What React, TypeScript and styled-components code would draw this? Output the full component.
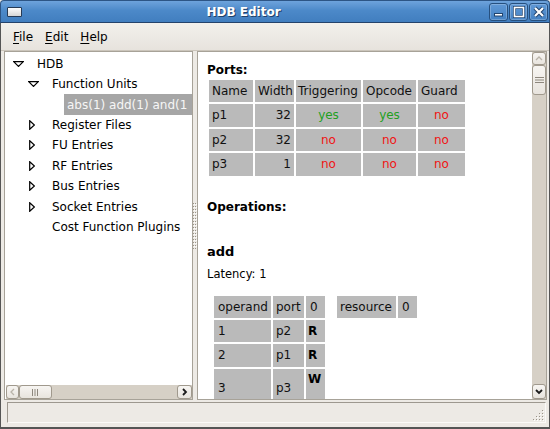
import React from "react";
import styled, { createGlobalStyle } from "styled-components";

const FONT = `"DejaVu Sans", "Liberation Sans", sans-serif`;

const GlobalStyle = createGlobalStyle`
  html, body { margin: 0; padding: 0; background: #edeae5; }
  body { font-family: ${FONT}; font-size: 12px; color: #000; }
  *, *::before, *::after { box-sizing: border-box; }
`;

const Window = styled.div`
  width: 550px;
  height: 429px;
  display: flex;
  flex-direction: column;
  overflow: hidden;
  background: #edeae5;
`;

const TitleBar = styled.div`
  height: 23px;
  flex: none;
  display: flex;
  align-items: center;
  padding: 0 1px 0 6px;
  background: linear-gradient(to bottom, #6ea3dc 0%, #4c89c9 45%, #417ebf 100%);
  border: 1px solid #2d5585;
  border-bottom-color: #24436b;
  border-radius: 4px 4px 0 0;
`;

const AppIcon = styled.div`
  width: 15px;
  height: 10px;
  flex: none;
  border: 1px solid #263a55;
  border-radius: 1px;
  background: linear-gradient(#fdfdfd, #d6d6d6);
`;

const TitleText = styled.div`
  flex: 1;
  text-align: center;
  padding-right: 23px;
  color: #fff;
  font-weight: bold;
  font-size: 12px;
  text-shadow: 1px 1px 0 #21416a;
`;

const TitleButton = styled.div`
  width: 19px;
  height: 18px;
  flex: none;
  margin-left: 1px;
  border: 1px solid #26507f;
  border-radius: 3px;
  background: linear-gradient(#5f98d6, #4582c3);
  box-shadow: inset 0 0 0 1px rgba(255, 255, 255, 0.22);
  display: flex;
  align-items: center;
  justify-content: center;
`;

const Frame = styled.div`
  flex: 1;
  min-height: 0;
  display: flex;
  flex-direction: column;
  border-left: 1px solid #555;
  border-right: 1px solid #555;
  border-bottom: 2px solid #555;
`;

const MenuBar = styled.div`
  height: 28px;
  flex: none;
  display: flex;
  align-items: center;
  gap: 12px;
  padding-left: 12px;
  background: linear-gradient(#f2f0ec, #e7e3dd);
  border-bottom: 1px solid #cbc5bb;
`;

const MenuItem = styled.span`
  font-size: 12px;
  color: #000;
  & u {
    text-underline-offset: 2px;
  }
`;

const Panes = styled.div`
  height: 349px;
  flex: none;
  display: flex;
  padding: 0 2px 0 3px;
`;

const LeftPane = styled.div`
  width: 189px;
  flex: none;
  display: flex;
  flex-direction: column;
  border: 1px solid #a7a298;
  background: #fff;
`;

const TreeArea = styled.div`
  flex: 1;
  overflow: hidden;
  padding-top: 1.5px;
`;

const TreeRow = styled.div<{ $indent: number }>`
  height: 20.45px;
  display: flex;
  align-items: center;
  padding-left: ${(p) => p.$indent}px;
  white-space: nowrap;
  font-size: 12px;
`;

const ExpanderSlot = styled.div<{ $offset?: number }>`
  width: 24px;
  flex: none;
  display: flex;
  align-items: center;
  padding-left: ${(p) => p.$offset ?? 0}px;
`;

const SelectedLabel = styled.div`
  height: 100%;
  display: flex;
  align-items: center;
  padding-left: 3px;
  background: #a6a6a6;
  color: #f6f6f6;
  flex: 1;
  overflow: hidden;
`;

const Handle = styled.div`
  width: 4px;
  flex: none;
  display: flex;
  align-items: center;
  justify-content: center;
`;

const RightPane = styled.div`
  flex: 1;
  display: flex;
  border: 1px solid #a7a298;
  background: #fff;
  min-width: 0;
`;

const RightView = styled.div`
  flex: 1;
  overflow: hidden;
  padding: 11px 0 0 9px;
  background: #fff;
`;

const SectionTitle = styled.div<{ $gap?: number }>`
  font-weight: bold;
  font-size: 12px;
  line-height: 15px;
  margin-top: ${(p) => p.$gap ?? 0}px;
`;

const OpName = styled.div`
  font-weight: bold;
  font-size: 13px;
  line-height: 18px;
  margin-top: 28px;
`;

const Latency = styled.div`
  font-size: 11.5px;
  line-height: 15px;
  margin-top: 6px;
`;

const Table = styled.table<{ $w: number }>`
  border-collapse: separate;
  border-spacing: 2px;
  table-layout: fixed;
  width: ${(p) => p.$w}px;
  font-size: 12px;
`;

const Col = styled.col<{ $w: number }>`
  width: ${(p) => p.$w}px;
`;

const Row = styled.tr<{ $h?: number }>`
  height: ${(p) => p.$h ?? 22}px;
`;

const Cell = styled.td<{
  $align?: "left" | "right" | "center";
  $tone?: "yes" | "no";
  $pad?: number;
}>`
  background: #bababa;
  padding: 0 ${(p) => p.$pad ?? 3}px;
  text-align: ${(p) => p.$align ?? "left"};
  vertical-align: middle;
  white-space: nowrap;
  line-height: 14px;
  color: ${(p) =>
    p.$tone === "yes" ? "#22a022" : p.$tone === "no" ? "#f01414" : "#111"};
`;

const FlagCell = styled(Cell)<{ $top?: boolean }>`
  font-weight: bold;
  padding-left: 2px;
  vertical-align: ${(p) => (p.$top ? "top" : "middle")};
  padding-top: ${(p) => (p.$top ? 3 : 0)}px;
  color: #000;
`;

const OpTables = styled.div`
  display: flex;
  align-items: flex-start;
  gap: 8px;
  margin: 11.5px 0 0 5px;
`;

const VScroll = styled.div`
  width: 14px;
  flex: none;
  display: flex;
  flex-direction: column;
  background: #d6d0c6;
`;

const HScroll = styled.div`
  height: 14px;
  flex: none;
  display: flex;
  background: #d6d0c6;
  margin-left: 1px;
`;

const Trough = styled.div`
  flex: 1;
  background: #d6d0c6;
`;

const ScrollPiece = styled.div<{ $w?: number; $h?: number }>`
  flex: none;
  width: ${(p) => (p.$w ? `${p.$w}px` : "auto")};
  height: ${(p) => (p.$h ? `${p.$h}px` : "auto")};
  background: linear-gradient(#f7f5f2, #e8e4de);
  border: 1px solid #a0998d;
  border-radius: 3px;
  display: flex;
  align-items: center;
  justify-content: center;
`;

const StatusRow = styled.div`
  height: 27px;
  flex: none;
  display: flex;
  padding: 2px 3px 4px 6px;
`;

const StatusBox = styled.div`
  flex: 1;
  display: flex;
  justify-content: flex-end;
  align-items: flex-end;
  border: 1px solid;
  border-color: #9d988f #fbfaf8 #fbfaf8 #9d988f;
  padding: 0 1px 1px 0;
`;

const Chevron = ({ dir, dim }: { dir: "up" | "down" | "left" | "right"; dim?: boolean }) => {
  const c = dim ? "#b9b3a9" : "#1c1c1c";
  const paths: Record<string, string> = {
    up: "M1 5 L4 2 L7 5",
    down: "M1 2 L4 5 L7 2",
    left: "M5 1 L2 4 L5 7",
    right: "M2 1 L5 4 L2 7",
  };
  const vertical = dir === "up" || dir === "down";
  return (
    <svg width={vertical ? 8 : 7} height={vertical ? 7 : 8} viewBox={vertical ? "0 0 8 7" : "0 0 7 8"}>
      <path d={paths[dir]} fill="none" stroke={c} strokeWidth={dim ? 1.3 : 1.8} />
    </svg>
  );
};

const GripLines = ({ vertical }: { vertical?: boolean }) =>
  vertical ? (
    <svg width="9" height="7" viewBox="0 0 9 7">
      {[0.5, 3, 5.5].map((y) => (
        <line key={y} x1="0" y1={y} x2="9" y2={y} stroke="#8d877d" strokeWidth="1" />
      ))}
    </svg>
  ) : (
    <svg width="7" height="7" viewBox="0 0 7 7">
      {[0.5, 3, 5.5].map((x) => (
        <line key={x} x1={x} y1="0" x2={x} y2="7" stroke="#8d877d" strokeWidth="1" />
      ))}
    </svg>
  );

const ExpandedIcon = () => (
  <svg width="11" height="6" viewBox="0 0 11 6">
    <polygon points="0.7,0.7 10.3,0.7 5.5,5.4" fill="#fff" stroke="#000" strokeWidth="1.2" />
  </svg>
);

const CollapsedIcon = () => (
  <svg width="6" height="10" viewBox="0 0 6 10">
    <polygon points="0.7,0.7 5.4,5 0.7,9.3" fill="#fff" stroke="#000" strokeWidth="1.2" />
  </svg>
);

const PaneGrip = () => (
  <svg width="4" height="46" viewBox="0 0 4 46">
    {Array.from({ length: 16 }).map((_, i) => (
      <g key={i}>
        <rect x="0" y={i * 3} width="1" height="1" fill="#9a9489" />
        <rect x="1" y={i * 3 + 1} width="1" height="1" fill="#fff" />
        <rect x="2" y={i * 3} width="1" height="1" fill="#9a9489" />
        <rect x="3" y={i * 3 + 1} width="1" height="1" fill="#fff" />
      </g>
    ))}
  </svg>
);

const ResizeGrip = () => {
  const dots: [number, number][] = [];
  for (let r = 0; r < 4; r++) {
    for (let c = 0; c <= r; c++) {
      dots.push([9 - c * 3, r * 3]);
    }
  }
  return (
    <svg width="11" height="11" viewBox="0 0 11 11">
      {dots.map(([x, y], i) => (
        <g key={i}>
          <rect x={x} y={y} width="1" height="1" fill="#9a9489" />
          <rect x={x + 1} y={y + 1} width="1" height="1" fill="#fff" />
        </g>
      ))}
    </svg>
  );
};

const MinimizeGlyph = () => (
  <svg width="11" height="11" viewBox="0 0 11 11">
    <rect x="1.5" y="7.5" width="8" height="2.5" fill="#fff" stroke="#21426b" strokeWidth="1" />
  </svg>
);

const MaximizeGlyph = () => (
  <svg width="12" height="12" viewBox="0 0 12 12">
    <rect x="1.5" y="1.5" width="9" height="9" fill="none" stroke="#21426b" strokeWidth="3" />
    <rect x="1.5" y="1.5" width="9" height="9" fill="none" stroke="#fff" strokeWidth="1.6" />
  </svg>
);

const CloseGlyph = () => (
  <svg width="12" height="12" viewBox="0 0 12 12">
    <path d="M2 2 L10 10 M10 2 L2 10" stroke="#21426b" strokeWidth="4" />
    <path d="M2 2 L10 10 M10 2 L2 10" stroke="#fff" strokeWidth="2.2" />
  </svg>
);

const treeItems = [
  "Register Files",
  "FU Entries",
  "RF Entries",
  "Bus Entries",
  "Socket Entries",
];

const ports = [
  { name: "p1", width: "32", trig: "yes", opc: "yes", guard: "no" },
  { name: "p2", width: "32", trig: "no", opc: "no", guard: "no" },
  { name: "p3", width: "1", trig: "no", opc: "no", guard: "no" },
];

const tone = (v: string) => (v === "yes" ? "yes" : "no") as "yes" | "no";

export default function App() {
  return (
    <>
      <GlobalStyle />
      <Window>
        <TitleBar>
          <AppIcon />
          <TitleText>HDB Editor</TitleText>
          <TitleButton>
            <MinimizeGlyph />
          </TitleButton>
          <TitleButton>
            <MaximizeGlyph />
          </TitleButton>
          <TitleButton>
            <CloseGlyph />
          </TitleButton>
        </TitleBar>
        <Frame>
          <MenuBar>
            <MenuItem>
              <u>F</u>ile
            </MenuItem>
            <MenuItem>
              <u>E</u>dit
            </MenuItem>
            <MenuItem>
              <u>H</u>elp
            </MenuItem>
          </MenuBar>
          <Panes>
            <LeftPane>
              <TreeArea>
                <TreeRow $indent={8}>
                  <ExpanderSlot>
                    <ExpandedIcon />
                  </ExpanderSlot>
                  HDB
                </TreeRow>
                <TreeRow $indent={23}>
                  <ExpanderSlot>
                    <ExpandedIcon />
                  </ExpanderSlot>
                  Function Units
                </TreeRow>
                <TreeRow $indent={59}>
                  <SelectedLabel>abs(1) add(1) and(1</SelectedLabel>
                </TreeRow>
                {treeItems.map((t) => (
                  <TreeRow key={t} $indent={23}>
                    <ExpanderSlot $offset={1}>
                      <CollapsedIcon />
                    </ExpanderSlot>
                    {t}
                  </TreeRow>
                ))}
                <TreeRow $indent={23}>
                  <ExpanderSlot />
                  Cost Function Plugins
                </TreeRow>
              </TreeArea>
              <HScroll>
                <ScrollPiece $w={13}>
                  <Chevron dir="left" dim />
                </ScrollPiece>
                <ScrollPiece $w={33}>
                  <GripLines />
                </ScrollPiece>
                <Trough />
                <ScrollPiece $w={15}>
                  <Chevron dir="right" />
                </ScrollPiece>
              </HScroll>
            </LeftPane>
            <Handle>
              <PaneGrip />
            </Handle>
            <RightPane>
              <RightView>
                <SectionTitle>Ports:</SectionTitle>
                <Table $w={260}>
                  <colgroup>
                    <Col $w={44} />
                    <Col $w={39} />
                    <Col $w={65} />
                    <Col $w={53} />
                    <Col $w={47} />
                  </colgroup>
                  <tbody>
                    <Row>
                      <Cell>Name</Cell>
                      <Cell>Width</Cell>
                      <Cell $pad={2}>Triggering</Cell>
                      <Cell>Opcode</Cell>
                      <Cell>Guard</Cell>
                    </Row>
                    {ports.map((p) => (
                      <Row key={p.name} $h={22.5}>
                        <Cell>{p.name}</Cell>
                        <Cell $align="right">{p.width}</Cell>
                        <Cell $align="center" $tone={tone(p.trig)}>
                          {p.trig}
                        </Cell>
                        <Cell $align="center" $tone={tone(p.opc)}>
                          {p.opc}
                        </Cell>
                        <Cell $align="center" $tone={tone(p.guard)}>
                          {p.guard}
                        </Cell>
                      </Row>
                    ))}
                  </tbody>
                </Table>
                <SectionTitle $gap={22.5}>Operations:</SectionTitle>
                <OpName>add</OpName>
                <Latency>Latency: 1</Latency>
                <OpTables>
                  <Table $w={115}>
                    <colgroup>
                      <Col $w={57} />
                      <Col $w={31} />
                      <Col $w={19} />
                    </colgroup>
                    <tbody>
                      <Row>
                        <Cell $pad={4}>operand</Cell>
                        <Cell>port</Cell>
                        <Cell $pad={4}>0</Cell>
                      </Row>
                      <Row>
                        <Cell $pad={4}>1</Cell>
                        <Cell>p2</Cell>
                        <FlagCell>R</FlagCell>
                      </Row>
                      <Row $h={23}>
                        <Cell $pad={4}>2</Cell>
                        <Cell>p1</Cell>
                        <FlagCell>R</FlagCell>
                      </Row>
                      <Row $h={38}>
                        <Cell $pad={4}>3</Cell>
                        <Cell>p3</Cell>
                        <FlagCell $top>W</FlagCell>
                      </Row>
                    </tbody>
                  </Table>
                  <Table $w={84}>
                    <colgroup>
                      <Col $w={59} />
                      <Col $w={19} />
                    </colgroup>
                    <tbody>
                      <Row>
                        <Cell>resource</Cell>
                        <Cell $pad={4}>0</Cell>
                      </Row>
                    </tbody>
                  </Table>
                </OpTables>
              </RightView>
              <VScroll>
                <ScrollPiece $h={13}>
                  <Chevron dir="up" dim />
                </ScrollPiece>
                <ScrollPiece $h={30}>
                  <GripLines vertical />
                </ScrollPiece>
                <Trough />
                <ScrollPiece $h={15}>
                  <Chevron dir="down" />
                </ScrollPiece>
              </VScroll>
            </RightPane>
          </Panes>
          <StatusRow>
            <StatusBox>
              <ResizeGrip />
            </StatusBox>
          </StatusRow>
        </Frame>
      </Window>
    </>
  );
}
